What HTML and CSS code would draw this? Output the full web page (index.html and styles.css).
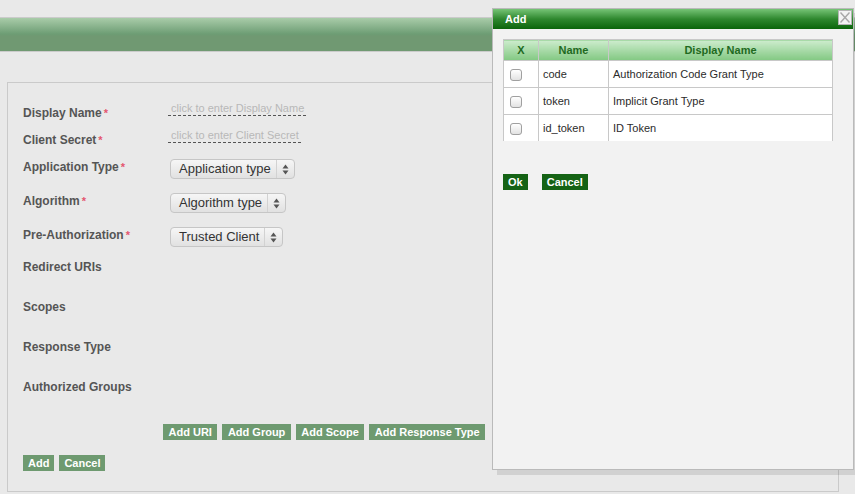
FILE: index.html
```html
<!DOCTYPE html>
<html>
<head>
<meta charset="utf-8">
<link rel="stylesheet" href="styles.css">
</head>
<body>
<div class="topbar"></div>
<div class="panel">
  <div class="row h27"><span class="lbl">Display Name<span class="req">*</span></span><span class="editable">click to enter Display Name</span></div>
  <div class="row h27"><span class="lbl">Client Secret<span class="req">*</span></span><span class="editable">click to enter Client Secret</span></div>
  <div class="row h34"><span class="lbl">Application Type<span class="req">*</span></span>
    <span class="select"><span class="val">Application type</span><span class="arr"><svg width="7" height="11" viewBox="0 0 7 11"><polygon points="0.5,4.5 3.5,0.5 6.5,4.5" fill="#555"/><polygon points="0.5,6.5 3.5,10.5 6.5,6.5" fill="#555"/></svg></span></span></div>
  <div class="row h34"><span class="lbl">Algorithm<span class="req">*</span></span>
    <span class="select"><span class="val">Algorithm type</span><span class="arr"><svg width="7" height="11" viewBox="0 0 7 11"><polygon points="0.5,4.5 3.5,0.5 6.5,4.5" fill="#555"/><polygon points="0.5,6.5 3.5,10.5 6.5,6.5" fill="#555"/></svg></span></span></div>
  <div class="row h32"><span class="lbl">Pre-Authorization<span class="req">*</span></span>
    <span class="select"><span class="val">Trusted Client</span><span class="arr"><svg width="7" height="11" viewBox="0 0 7 11"><polygon points="0.5,4.5 3.5,0.5 6.5,4.5" fill="#555"/><polygon points="0.5,6.5 3.5,10.5 6.5,6.5" fill="#555"/></svg></span></span></div>
  <div class="row h40"><span class="lbl">Redirect URIs</span></div>
  <div class="row h40"><span class="lbl">Scopes</span></div>
  <div class="row h40"><span class="lbl">Response Type</span></div>
  <div class="row h44"><span class="lbl">Authorized Groups</span></div>
  <div class="actions">
    <button class="btn">Add URI</button>
    <button class="btn">Add Group</button>
    <button class="btn">Add Scope</button>
    <button class="btn">Add Response Type</button>
  </div>
  <div class="footer">
    <button class="btn">Add</button>
    <button class="btn">Cancel</button>
  </div>
</div>

<div class="dialog">
  <div class="dlg-title">Add
    <span class="close"><svg width="12" height="13" viewBox="0 0 12 13"><line x1="1.5" y1="1.5" x2="10.5" y2="11.5" stroke="#a8a8a8" stroke-width="1.4"/><line x1="10.5" y1="1.5" x2="1.5" y2="11.5" stroke="#a8a8a8" stroke-width="1.4"/></svg></span>
  </div>
  <div class="dlg-body">
    <table class="grid">
      <thead>
        <tr><th class="c1">X</th><th class="c2">Name</th><th>Display Name</th></tr>
      </thead>
      <tbody>
        <tr><td class="cbcell"><input type="checkbox" class="cb"></td><td>code</td><td>Authorization Code Grant Type</td></tr>
        <tr><td class="cbcell"><input type="checkbox" class="cb"></td><td>token</td><td>Implicit Grant Type</td></tr>
        <tr class="last"><td class="cbcell"><input type="checkbox" class="cb"></td><td>id_token</td><td>ID Token</td></tr>
      </tbody>
    </table>
    <div class="dlg-actions">
      <button class="btn dark">Ok</button>
      <button class="btn dark">Cancel</button>
    </div>
  </div>
</div>
</body>
</html>
```
FILE: styles.css
```css
html, body {
  margin: 0;
  padding: 0;
}
body {
  background: #e9e9e9;
  font-family: "Liberation Sans", Arial, sans-serif;
  width: 855px;
  height: 494px;
  overflow: hidden;
  position: relative;
}
.topbar {
  margin-top: 17px;
  height: 33px;
  border-top: 1px solid #cbcbcb;
  border-bottom: 1px solid #cbcbcb;
  background: linear-gradient(to bottom, #a9cca9 0px, #6d9d74 16px, #709972 18px, #709972 100%);
}
.panel {
  margin: 30px 16px 0 7px;
  border: 1px solid #cacaca;
  padding: 23px 15px 20px 15px;
}
.row {
  display: flex;
  align-items: flex-start;
}
.h27 { height: 27px; }
.h32 { height: 32px; }
.h34 { height: 34px; }
.h40 { height: 40px; }
.h44 { height: 44px; }
.lbl {
  width: 145px;
  flex: none;
  font-size: 12px;
  font-weight: bold;
  line-height: 15px;
  color: #555;
}
.req {
  color: #e4566f;
  margin-left: 2px;
  font-size: 11px;
}
.editable {
  display: inline-block;
  margin-top: -4px;
  padding: 0 3px 1px 3px;
  font-size: 11px;
  line-height: 13px;
  color: #b8b8b8;
  background: repeating-linear-gradient(to right, #555 0 3px, transparent 3px 5px) left bottom / 100% 1px no-repeat;
}
.select {
  display: inline-flex;
  align-items: center;
  height: 20px;
  box-sizing: border-box;
  margin-left: 2px;
  margin-top: -1px;
  border: 1px solid #c6c6c6;
  border-radius: 4px;
  background: linear-gradient(to bottom, #f6f6f6, #e1e1e1);
  font-size: 13px;
  color: #333;
}
.select .val {
  padding: 0 5px 0 8px;
  line-height: 18px;
}
.select .arr {
  width: 17px;
  height: 18px;
  border-left: 1px solid #d2d2d2;
  display: flex;
  align-items: center;
  justify-content: center;
}
.actions {
  display: flex;
  gap: 5px;
  margin-left: 140px;
}
.footer {
  display: flex;
  gap: 5px;
  margin-top: 15px;
}
.btn {
  margin: 0;
  border: 0;
  padding: 0 5px;
  height: 16px;
  line-height: 16px;
  font-family: "Liberation Sans", Arial, sans-serif;
  font-size: 11px;
  font-weight: bold;
  color: #fff;
  background: #6e9a70;
  cursor: pointer;
}
.actions .btn {
  padding: 0 5.5px;
}
.btn.dark {
  background: #156315;
}
.dialog {
  position: absolute;
  left: 492px;
  top: 8px;
  width: 360px;
  height: 460px;
  border: 1px solid #bababa;
  background: #f2f2f2;
  box-shadow: 5px 5px 0 rgba(0, 0, 0, 0.1);
}
.dlg-title {
  position: relative;
  height: 20px;
  line-height: 20px;
  padding-left: 12px;
  font-size: 11px;
  font-weight: bold;
  color: #fff;
  background: linear-gradient(to bottom, #76c476 0%, #2f882f 50%, #0b650b 100%);
}
.close {
  position: absolute;
  right: 1px;
  top: 1px;
  width: 14px;
  height: 15px;
  box-sizing: border-box;
  border: 1px solid #b5b5b5;
  background: #f4f4f4;
  display: flex;
  align-items: center;
  justify-content: center;
}
.dlg-body {
  padding: 10px 0 0 10px;
}
.grid {
  border-collapse: collapse;
  width: 330px;
  font-size: 11px;
}
.grid th, .grid td {
  border: 1px solid #c8c8c8;
  line-height: 14px;
}
.grid th {
  padding: 3px 5px;
  color: #1f6a1f;
  font-weight: bold;
  text-align: center;
  background: linear-gradient(to bottom, #cdeccd, #82c882);
}
.grid th.c1 { width: 24px; }
.grid th.c2 { width: 59px; }
.grid td {
  padding: 6px 4px;
  background: #fff;
  color: #2b2b2b;
  text-align: left;
}
.grid tr.last td {
  border-bottom: 0;
}
.grid td.cbcell {
  padding-left: 6px;
}
.cb {
  appearance: none;
  -webkit-appearance: none;
  display: inline-block;
  width: 12px;
  height: 12px;
  margin: 0;
  vertical-align: middle;
  box-sizing: border-box;
  border: 1px solid #a0a0a0;
  border-radius: 3px;
  background: linear-gradient(to bottom, #ffffff, #e2e2e2);
}
.dlg-actions {
  display: flex;
  gap: 14px;
  margin-top: 33px;
}
```
